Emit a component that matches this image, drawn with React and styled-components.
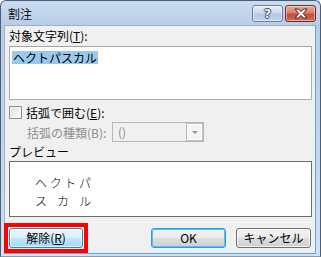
import React from "react";
import styled, { createGlobalStyle } from "styled-components";

const GlobalStyle = createGlobalStyle`
  html, body {
    margin: 0;
    padding: 0;
    background: #ffffff;
  }
  body {
    font-family: "Noto Sans CJK JP", "Liberation Sans", sans-serif;
    font-size: 12px;
    color: #000;
  }
`;

const Window = styled.div`
  box-sizing: border-box;
  width: 321px;
  height: 257px;
  display: flex;
  flex-direction: column;
  border: 1px solid #4f5d73;
  border-bottom-color: #8a9ab0;
  border-radius: 6px 6px 0 0;
  padding: 0 4px 4px 3px;
  background: linear-gradient(to bottom, #cadcf0 0, #b7cde7 24px, #c3d6ec 60%, #d2e1f2 100%);
  overflow: hidden;
`;

const TitleBar = styled.div`
  height: 24px;
  display: flex;
  align-items: flex-start;
  justify-content: space-between;
  flex-shrink: 0;
`;

const Title = styled.div`
  padding: 5px 0 0 4px;
  font-size: 12px;
  line-height: 15px;
  color: #111;
`;

const Caption = styled.div`
  display: flex;
  gap: 2px;
  padding-top: 4px;
`;

const CaptionButton = styled.div`
  box-sizing: border-box;
  width: 31px;
  height: 17px;
  display: flex;
  align-items: center;
  justify-content: center;
  border: 1px solid ${(p) => (p.close ? "#6b2a22" : "#6b7f9d")};
  border-radius: 3px;
  background: ${(p) =>
    p.close
      ? "linear-gradient(to bottom, #e9a899 0, #d9806d 45%, #c44d38 55%, #cf6a55 100%)"
      : "linear-gradient(to bottom, #e3ecf7 0, #cbdaee 45%, #b3c8e3 55%, #c2d4ea 100%)"};
  box-shadow: inset 0 0 0 1px rgba(255, 255, 255, 0.45);
`;

const HelpGlyph = styled.span`
  font-family: "DejaVu Sans", sans-serif;
  font-weight: bold;
  font-size: 12px;
  line-height: 12px;
  color: #f4f7fb;
  text-shadow: 1px 0 0 #3e4a5c, -1px 0 0 #3e4a5c, 0 1px 0 #3e4a5c, 0 -1px 0 #3e4a5c;
`;

const Client = styled.div`
  flex: 1;
  display: flex;
  flex-direction: column;
  background: #f0f0f0;
  border: 1px solid #9db1cb;
  border-right-color: #58a7d8;
  border-bottom-color: #58a7d8;
  padding: 2px 3px 0 4px;
`;

const Label = styled.div`
  line-height: 15px;
  height: 15px;
  width: ${(p) => (p.w ? `${p.w}px` : "auto")};
  flex-shrink: 0;
  margin-top: ${(p) => p.top || 0}px;
  color: ${(p) => (p.disabled ? "#8d8d8d" : "#000")};
  white-space: nowrap;
`;

const TextBox = styled.div`
  box-sizing: border-box;
  height: 54px;
  margin-top: 3px;
  background: #fff;
  border: 1px solid #abadb3;
  border-top-color: #a0a3aa;
  padding: 2px 2px;
`;

const Selected = styled.span`
  background: #99c9ef;
  line-height: 13px;
  display: inline-block;
  padding: 0 1px;
`;

const CheckRow = styled.label`
  display: flex;
  align-items: center;
  gap: 4px;
  height: 16px;
  margin-top: 4px;
`;

const CheckBox = styled.span`
  box-sizing: border-box;
  width: 13px;
  height: 13px;
  border: 1px solid #8f8f8f;
  background: linear-gradient(135deg, #dcdcdc 0, #f4f4f4 70%, #ffffff 100%);
  box-shadow: inset 0 0 0 1px #f4f4f4;
`;

const ComboRow = styled.div`
  display: flex;
  align-items: center;
  margin-top: 2px;
  padding-left: 18px;
`;

const Combo = styled.div`
  box-sizing: border-box;
  width: 92px;
  height: 20px;
  display: flex;
  border: 1px solid #b5b5b5;
  background: #f0f0f0;
  color: #8d8d8d;
`;

const ComboText = styled.div`
  flex: 1;
  padding-left: 5px;
  line-height: 17px;
`;

const DropButton = styled.div`
  box-sizing: border-box;
  width: 17px;
  height: 18px;
  border: 1px solid #c3c3c3;
  border-left-color: #b5b5b5;
  background: #f4f4f4;
  box-shadow: inset 0 0 0 1px #fbfbfb;
  display: flex;
  align-items: center;
  justify-content: center;
`;

const Arrow = styled.span`
  width: 0;
  height: 0;
  border-left: 3px solid transparent;
  border-right: 3px solid transparent;
  border-top: 3px solid #9a9a9a;
`;

const Preview = styled.div`
  box-sizing: border-box;
  height: 56px;
  margin-top: 2px;
  background: #fff;
  border: 1px solid #6d6d6d;
  padding: 12px 0 0 25px;
`;

const PreviewLine = styled.div`
  width: 56px;
  display: flex;
  justify-content: space-between;
  line-height: 18px;
  font-size: 12px;
  font-weight: 300;
`;

const ButtonRow = styled.div`
  display: flex;
  justify-content: space-between;
  align-items: center;
  margin-top: 6px;
  margin-left: -5px;
  padding-right: 1px;
`;

const Group = styled.div`
  display: flex;
  gap: 10px;
`;

const Marker = styled.div`
  border: 4px solid #ff0000;
  padding: 1px;
`;

const Button = styled.div`
  box-sizing: border-box;
  width: ${(p) => p.w || 75}px;
  height: 20px;
  display: flex;
  align-items: center;
  justify-content: center;
  border: 1px solid ${(p) => (p.hover ? "#3c7fb1" : p.primary ? "#3399dd" : "#707070")};
  border-radius: 3px;
  background: ${(p) =>
    p.hover
      ? "linear-gradient(to bottom, #eaf6fd 0, #d9f0fc 50%, #bee6fd 50%, #a7d9f5 100%)"
      : "linear-gradient(to bottom, #f2f2f2 0, #ebebeb 50%, #dddddd 50%, #cfcfcf 100%)"};
  box-shadow: ${(p) =>
    p.primary ? "inset 0 0 0 1px #48c6f3" : "inset 0 0 0 1px rgba(255,255,255,0.7)"};
  line-height: 14px;
`;

function HelpIcon() {
  return <HelpGlyph>?</HelpGlyph>;
}

function CloseIcon() {
  return (
    <svg width="14" height="11" viewBox="0 0 14 11">
      <path
        d="M1 1h3.5L7 3.6 9.5 1H13L9.2 5.5 13 10H9.5L7 7.4 4.5 10H1l3.8-4.5z"
        fill="#ffffff"
        stroke="#4a1c16"
        strokeWidth="1"
        strokeLinejoin="round"
      />
    </svg>
  );
}

export default function App() {
  return (
    <>
      <GlobalStyle />
      <Window>
        <TitleBar>
          <Title>割注</Title>
          <Caption>
            <CaptionButton>
              <HelpIcon />
            </CaptionButton>
            <CaptionButton close>
              <CloseIcon />
            </CaptionButton>
          </Caption>
        </TitleBar>
        <Client>
          <Label>
            対象文字列(<u>T</u>):
          </Label>
          <TextBox>
            <Selected>ヘクトパスカル</Selected>
          </TextBox>
          <CheckRow>
            <CheckBox />
            <span>
              括弧で囲む(<u>E</u>):
            </span>
          </CheckRow>
          <ComboRow>
            <Label disabled w={85}>
              括弧の種類(B):
            </Label>
            <Combo>
              <ComboText>()</ComboText>
              <DropButton>
                <Arrow />
              </DropButton>
            </Combo>
          </ComboRow>
          <Label top={2}>プレビュー</Label>
          <Preview>
            <PreviewLine>
              <span>ヘ</span>
              <span>ク</span>
              <span>ト</span>
              <span>パ</span>
            </PreviewLine>
            <PreviewLine>
              <span>ス</span>
              <span>カ</span>
              <span>ル</span>
            </PreviewLine>
          </Preview>
          <ButtonRow>
            <Marker>
              <Button w={74} hover>
                解除(<u>R</u>)
              </Button>
            </Marker>
            <Group>
              <Button primary>OK</Button>
              <Button>キャンセル</Button>
            </Group>
          </ButtonRow>
        </Client>
      </Window>
    </>
  );
}
